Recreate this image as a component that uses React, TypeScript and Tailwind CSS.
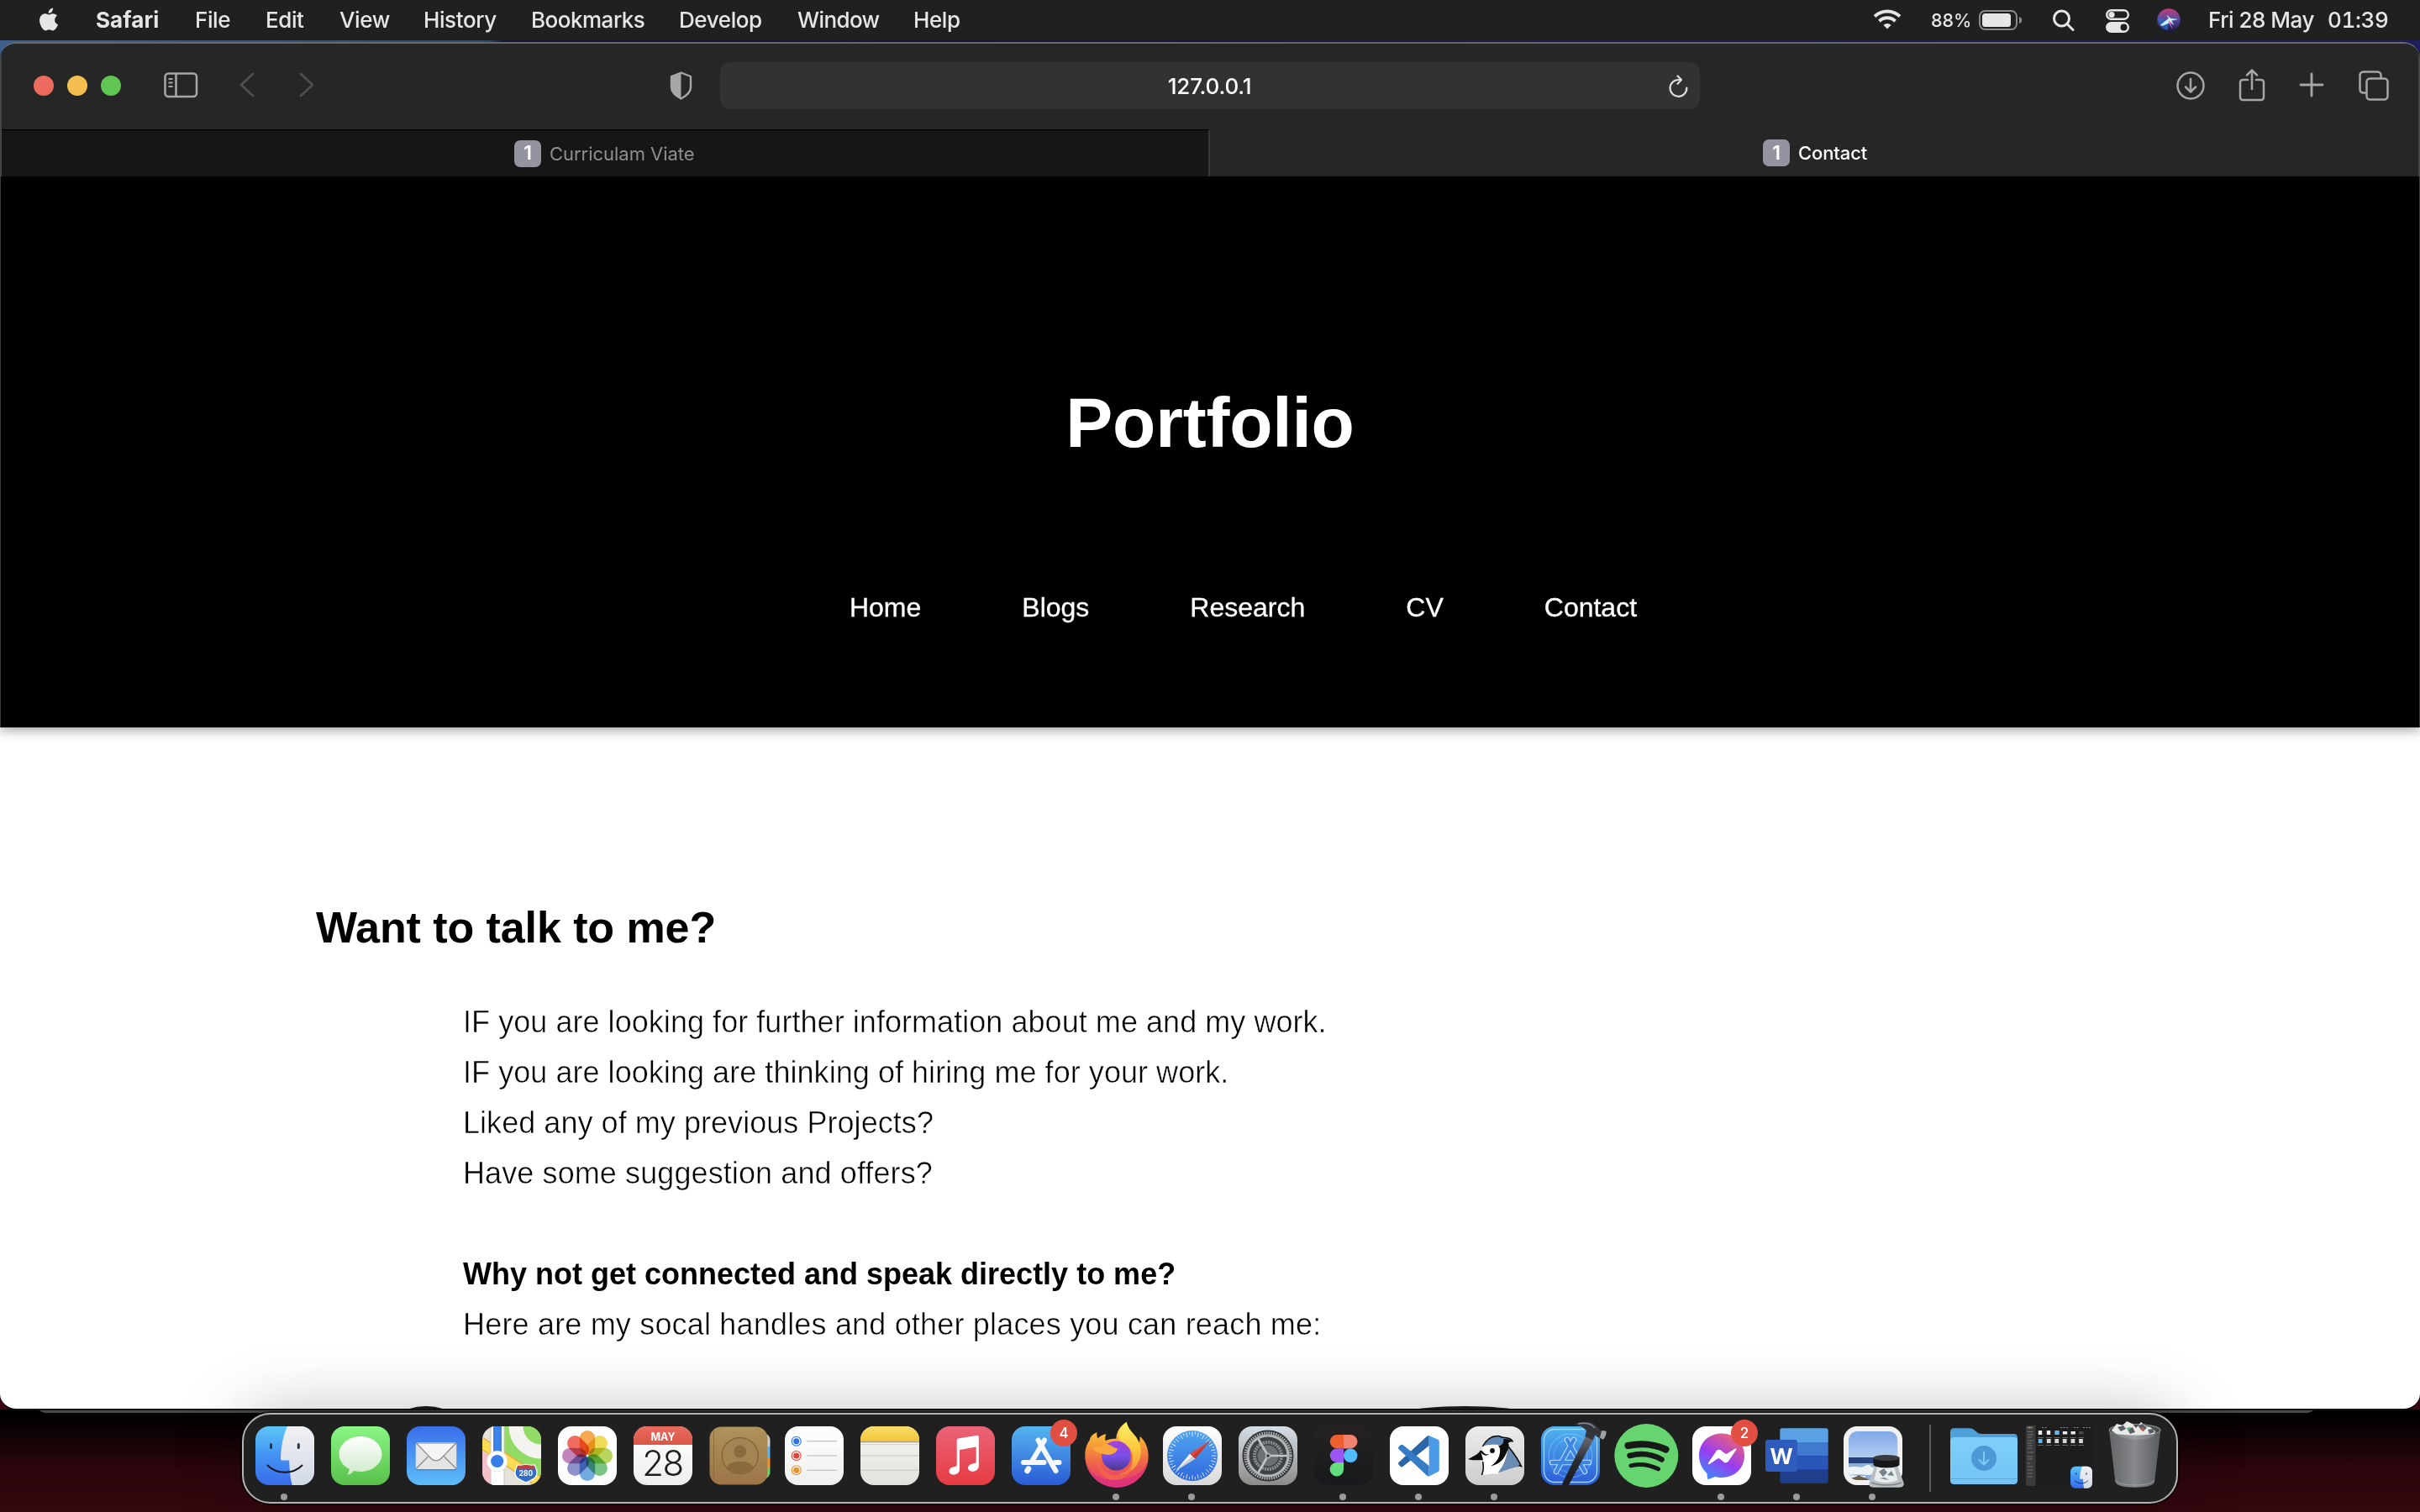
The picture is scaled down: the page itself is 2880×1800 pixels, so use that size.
import React from "react";

type Kids = { children?: React.ReactNode };

/* ---------- Menu bar ---------- */

const menus = [
  { label: "Safari", cls: "w-[118px] font-bold tracking-[0.1px]" },
  { label: "File", cls: "w-[84px]" },
  { label: "Edit", cls: "w-[88px]" },
  { label: "View", cls: "w-[100px]" },
  { label: "History", cls: "w-[128px]" },
  { label: "Bookmarks", cls: "w-[176px] tracking-[-0.5px]" },
  { label: "Develop", cls: "w-[141px]" },
  { label: "Window", cls: "w-[138px] tracking-[-0.6px]" },
  { label: "Help", cls: "w-[80px]" },
];

function MenuBar() {
  return (
    <div className="flex h-[48px] shrink-0 items-center bg-[#202020] text-[26px] leading-[48px] font-medium text-[#e6e6e6] tracking-[-0.4px]">
      <svg className="ml-[42px] mb-[3px] h-[34px] w-[28px]" viewBox="0 0 27 32" fill="#e6e6e6">
        <path d="M22.3 17c0-3.3 2.700-4.900 2.800-5-1.500-2.200-3.900-2.500-4.700-2.600-2-.2-3.900 1.200-4.900 1.200s-2.600-1.200-4.200-1.100c-2.200 0-4.200 1.300-5.300 3.200-2.300 4-.6 9.800 1.600 13 1.100 1.600 2.400 3.300 4.100 3.300 1.600-.1 2.300-1.100 4.200-1.100 2 0 2.500 1.100 4.300 1 1.800 0 2.900-1.600 4-3.200 1.200-1.800 1.800-3.600 1.800-3.700-.1 0-3.700-1.400-3.700-5zM19 7.300c.9-1.100 1.500-2.600 1.300-4.200-1.300.1-2.900.9-3.800 2-.8.900-1.600 2.500-1.400 4 1.500.1 3-.7 3.900-1.800z" />
      </svg>
      <div className="ml-[44px] flex">
        {menus.map((m) => (
          <span key={m.label} className={m.cls}>{m.label}</span>
        ))}
      </div>
      <div className="ml-auto flex items-center pr-[38px]">
        <svg className="mb-[2px] h-[26px] w-[34px]" viewBox="0 0 34 26" fill="none" stroke="#e6e6e6" strokeWidth="4">
          <path d="M2 9.500a21.500 21.500 0 0 1 30 0" />
          <path d="M7.500 15.200a13.600 13.600 0 0 1 19 0" />
          <path d="M17 24.500l-4.600-4.700a6.500 6.500 0 0 1 9.200 0z" fill="#e6e6e6" stroke="none" />
        </svg>
        <span className="ml-[35px] w-[57px] text-[21.500px] tracking-[0px]">88%</span>
        <svg className="h-[24px] w-[52px]" viewBox="0 0 52 24">
          <rect x="1" y="1" width="44" height="22" rx="6.500" fill="none" stroke="#8a8a8a" strokeWidth="2" />
          <rect x="4" y="4" width="34" height="16" rx="3.500" fill="#e6e6e6" />
          <path d="M48 8c2 .6 3.200 2 3.200 4s-1.200 3.400-3.200 4z" fill="#8a8a8a" />
        </svg>
        <svg className="ml-[35px] h-[26px] w-[28px]" viewBox="0 0 28 26" fill="none" stroke="#e6e6e6" strokeWidth="3">
          <circle cx="11.500" cy="11" r="9" />
          <path d="M18 17.500l7 7" strokeLinecap="round" />
        </svg>
        <svg className="ml-[36px] mt-[2px] h-[28px] w-[28px]" viewBox="0 0 28 28">
          <rect x="1.200" y="1.200" width="25.600" height="10.600" rx="5.300" fill="none" stroke="#e6e6e6" strokeWidth="2.400" />
          <circle cx="7" cy="6.500" r="3.600" fill="#e6e6e6" />
          <rect x="0" y="15" width="28" height="13" rx="6.500" fill="#e6e6e6" />
          <circle cx="21.500" cy="21.500" r="4" fill="#202020" />
        </svg>
        <svg className="ml-[33px] h-[30px] w-[28px]" viewBox="0 0 28 28">
          <defs>
            <linearGradient id="siri" x1="0" y1="0" x2="0" y2="1">
              <stop offset="0" stopColor="#c43d7d" />
              <stop offset=".45" stopColor="#5a4a9c" />
              <stop offset="1" stopColor="#151640" />
            </linearGradient>
          </defs>
          <circle cx="14" cy="14" r="13.800" fill="url(#siri)" />
          <path d="M1 12c1 7 6 13 12 14L14 14z" fill="#2a6fd0" opacity=".7" />
          <path d="M4 20L14 12l-2-4 4 4 8 1-7 1.500 3 5-4-3-9 4z" fill="#d9f4ff" stroke="#8fe0ee" strokeWidth=".5" />
          <path d="M15 14l3.500 11-5-9z" fill="#f06ac0" />
        </svg>
        <span className="ml-[33px] w-[142px] whitespace-nowrap tracking-[-0.5px]">Fri 28 May</span>
        <span className="w-[72px] whitespace-nowrap tabular-nums tracking-[-0.4px]">01:39</span>
      </div>
    </div>
  );
}

/* ---------- Browser chrome ---------- */

function Toolbar() {
  return (
    <div className="flex h-[104px] shrink-0 items-center border-x-2 border-[#454545] bg-[#262626] px-[38px]">
      <div className="flex gap-[16px]">
        <span className="size-[24px] rounded-full bg-[#ed6a5f]" />
        <span className="size-[24px] rounded-full bg-[#f5bf4f]" />
        <span className="size-[24px] rounded-full bg-[#61c554]" />
      </div>
      <svg className="ml-[51px] mb-[2px] h-[31px] w-[41px]" viewBox="0 0 41 31" fill="none" stroke="#a6a6a6" strokeWidth="2.600">
        <rect x="1.500" y="1.500" width="37.500" height="27.500" rx="4" />
        <path d="M14.500 2v27" />
        <path d="M5.500 8h5M5.500 12.500h5M5.500 17h5" strokeWidth="2" />
      </svg>
      <svg className="ml-[48px] mb-[2px] h-[30px] w-[20px]" viewBox="0 0 20 30" fill="none" stroke="#4f4f4f" strokeWidth="2.800" strokeLinecap="round" strokeLinejoin="round">
        <path d="M17 2L3 15l14 13" />
      </svg>
      <svg className="ml-[51px] mb-[2px] h-[30px] w-[20px]" viewBox="0 0 20 30" fill="none" stroke="#4f4f4f" strokeWidth="2.800" strokeLinecap="round" strokeLinejoin="round">
        <path d="M3 2l14 13L3 28" />
      </svg>
      <svg className="ml-[421px] mb-[1px] h-[34px] w-[29px]" viewBox="0 0 29 34">
        <path d="M14.500 1.500L26 6v13c0 6-5 10-11.500 13.500C8 29 3 25 3 19V6z" fill="none" stroke="#a6a6a6" strokeWidth="2.400" strokeLinejoin="round" />
        <path d="M14.500 1.500v31C8 29 3 25 3 19V6z" fill="#a6a6a6" />
      </svg>
      <div className="relative ml-[32px] flex h-[56px] w-[1166px] items-center justify-center rounded-[12px] bg-[#323232] text-[26px] font-medium text-white">
        <span className="mr-[1px] mt-[1px] tracking-[-0.2px]">127.0.0.1</span>
        <svg className="absolute right-[13px] top-[15px] h-[28px] w-[25px]" viewBox="0 0 25 28" fill="none" stroke="#dcdcdc" strokeWidth="2.200" strokeLinecap="round" strokeLinejoin="round">
          <path d="M22.300 15.500A9.900 9.900 0 1 1 12.400 6h3" />
          <path d="M11.500 1.500L16 6l-4.500 4.800" />
        </svg>
      </div>
      <div className="-mr-[3px] ml-auto flex items-center text-[#a6a6a6]">
        <svg className="h-[36px] w-[36px]" viewBox="0 0 36 36" fill="none" stroke="currentColor" strokeWidth="2.500" strokeLinecap="round" strokeLinejoin="round">
          <circle cx="18" cy="18" r="15.500" />
          <path d="M18 10v15M12 19.500l6 6 6-6" />
        </svg>
        <svg className="ml-[39px] mb-[3px] h-[40px] w-[32px]" viewBox="0 0 32 40" fill="none" stroke="currentColor" strokeWidth="2.500" strokeLinecap="round" strokeLinejoin="round">
          <path d="M11 14H5a3 3 0 0 0-3 3v18a3 3 0 0 0 3 3h22a3 3 0 0 0 3-3V17a3 3 0 0 0-3-3h-6" />
          <path d="M16 25V3M10 8.500L16 2.500l6 6" />
        </svg>
        <svg className="ml-[40px] mb-[3px] h-[30px] w-[30px]" viewBox="0 0 30 30" fill="none" stroke="currentColor" strokeWidth="2.800" strokeLinecap="round">
          <path d="M15 2v26M2 15h26" />
        </svg>
        <svg className="ml-[41px] mb-[1px] h-[36px] w-[36px]" viewBox="0 0 36 36" fill="none" stroke="currentColor" strokeWidth="2.500" strokeLinejoin="round">
          <path d="M9.500 26.500H5.500a4 4 0 0 1-4-4V5.500a4 4 0 0 1 4-4h17a4 4 0 0 1 4 4V9" />
          <rect x="9.500" y="9.500" width="25" height="25" rx="4" />
        </svg>
      </div>
    </div>
  );
}

function Badge() {
  return (
    <span className="flex size-[32px] items-center justify-center rounded-[7px] bg-[#9494a0] text-[23px] font-semibold leading-none text-white">
      1
    </span>
  );
}

function TabStrip() {
  return (
    <div className="flex h-[56px] shrink-0 border-x-2 border-[#454545] bg-[#262626] text-[22px]">
      <div className="flex w-[1438px] items-center justify-center gap-[10px] border-t border-r-2 border-t-black border-r-[#383838] bg-[#161616] text-[#8f8f8f]">
        <Badge />
        <span className="mt-px w-[174px] whitespace-nowrap tracking-[-0.03px]">Curriculam Viate</span>
      </div>
      <div className="flex flex-1 items-center justify-center gap-[10px] pl-[3px] text-white">
        <Badge />
        <span className="mt-px w-[83px] font-medium tracking-[-0.1px]">Contact</span>
      </div>
    </div>
  );
}

/* ---------- Web page ---------- */

function Page() {
  return (
    <div className="relative flex-1 overflow-hidden bg-white font-['Liberation_Sans',sans-serif]">
      <header className="flex h-[656px] flex-col items-center border-x border-[#3c3c3c] bg-black text-white shadow-[0_4px_12px_rgba(0,0,0,0.34)]">
        <h1 className="mt-[245px] text-[84px] font-bold leading-[96px] tracking-[-0.2px]">Portfolio</h1>
        <nav className="mt-[154px] ml-[79px] flex gap-[120px] text-[32px] leading-[36px] [-webkit-text-stroke:0.300px_#ffffff]">
          <a>Home</a>
          <a>Blogs</a>
          <a>Research</a>
          <a>CV</a>
          <a>Contact</a>
        </nav>
      </header>
      <main className="text-black">
        <h2 className="mt-[208px] ml-[376px] text-[52px] font-bold leading-[60px] tracking-[-0.080px]">Want to talk to me?</h2>
        <div className="mt-[53px] ml-[551px] text-[36px] leading-[60px] whitespace-nowrap tracking-[0.050px] [-webkit-text-stroke:0.500px_#ffffff]">
          <p>IF you are looking for further information about me and my work.</p>
          <p>IF you are looking are thinking of hiring me for your work.</p>
          <p>Liked any of my previous Projects?</p>
          <p className="tracking-[0.100px]">Have some suggestion and offers?</p>
          <p className="mt-[60px] font-bold tracking-[0px] [-webkit-text-stroke:0]">Why not get connected and speak directly to me?</p>
          <p className="tracking-[0.180px]">Here are my socal handles and other places you can reach me:</p>
        </div>
      </main>
      <div className="absolute left-[446px] top-[1464px] h-[120px] w-[122px] rounded-full bg-[#1c1f1e]" />
      <div className="absolute left-[1619px] top-[1464px] h-[60px] w-[248px] rounded-[50%] bg-[#1c211f]" />
    </div>
  );
}

/* ---------- Dock ---------- */

function Slot({ children, running }: Kids & { running?: boolean }) {
  return (
    <svg className="h-[104px] w-[90px] shrink-0 overflow-visible font-['Inter',sans-serif]" viewBox="0 0 90 104">
      {children}
      {running && <circle cx="44" cy="98" r="4" fill="#9c9c9c" />}
    </svg>
  );
}

function Tile({ fill }: { fill: string }) {
  return <rect x="10" y="14" width="70" height="70" rx="16" fill={fill} />;
}

function Grad({ id, stops }: { id: string; stops: string[] }) {
  return (
    <linearGradient id={id} x1="0" y1="0" x2="0" y2="1">
      {stops.map((c, i) => (
        <stop key={i} offset={i / (stops.length - 1)} stopColor={c} />
      ))}
    </linearGradient>
  );
}

function FinderArt() {
  return (
    <>
      <Tile fill="url(#fBlue)" />
      <path d="M48 14h16a16 16 0 0 1 16 16v38a16 16 0 0 1-16 16H53.700c-1.600-6-3.300-17-3.500-29.500H41.500c-1.200 0-1.700-.8-1.500-2C40.500 37 43 25 48 14z" fill="url(#fWhite)" />
      <path d="M28.500 35.500v4M61.300 35.500v4" stroke="#2c3444" strokeWidth="3" strokeLinecap="round" />
      <path d="M24.500 60.500c11 11 30 11 41 0" fill="none" stroke="#15181f" strokeWidth="2" strokeLinecap="round" />
    </>
  );
}

const petals = ["#f2962c", "#eed22f", "#a9cb3b", "#5cb768", "#4f97d9", "#7577bd", "#b46caf", "#ec4d3d"];
const ticks = Array.from({ length: 48 }, (_, i) => i * 7.5);

function RedBadge({ text }: { text: string }) {
  return (
    <>
      <circle cx="72" cy="22" r="16" fill="#e04f41" />
      <text x="72" y="28" fontSize="17" textAnchor="middle" fill="#fff" fontWeight="500">{text}</text>
    </>
  );
}

function Dock() {
  return (
    <div className="relative z-10 mx-auto mt-[4px] flex h-[108px] w-[2304px] rounded-[34px] border-2 border-[#b3b3b3] bg-[#202020] pl-[4px] shadow-[0_0_0_2px_rgba(0,0,0,0.6),0_0_80px_rgba(0,0,0,0.26)]">
      <svg className="absolute size-0">
        <defs>
          <Grad id="fBlue" stops={["#5cc6f8", "#4393f3", "#386be9"]} />
          <Grad id="fWhite" stops={["#f0f0f3", "#d2dae6"]} />
          <Grad id="gMsg" stops={["#8af684", "#58c04a"]} />
          <Grad id="gBubble" stops={["#ffffff", "#cdeac8"]} />
          <Grad id="gMail" stops={["#396eea", "#5ebcf8"]} />
          <Grad id="gPaper" stops={["#ffffff", "#f0efed"]} />
          <Grad id="gRed" stops={["#ea6a5e", "#d95648"]} />
          <Grad id="gTan" stops={["#b0925a", "#9c7448"]} />
          <Grad id="gNote" stops={["#f9dd69", "#f3c63c"]} />
          <Grad id="gGrey" stops={["#f6f5f3", "#e2e1dc"]} />
          <Grad id="gMusic" stops={["#ea6478", "#e63b42"]} />
          <Grad id="gStore" stops={["#55b5f0", "#2a5bd6"]} />
          <Grad id="gFox" stops={["#fcdf4b", "#f7a035", "#ee5c4c", "#e4377c"]} />
          <Grad id="gFoxY" stops={["#fdf169", "#fbc93c", "#f58b3b"]} />
          <Grad id="gPurple" stops={["#a540d8", "#7a50e8", "#4c3590"]} />
          <Grad id="gSafari" stops={["#50a6f0", "#2f67dc"]} />
          <Grad id="gTile" stops={["#ffffff", "#d9d9d9"]} />
          <Grad id="gPref" stops={["#d5dfe6", "#8d8b88"]} />
          <Grad id="gFig" stops={["#262222", "#17191c"]} />
          <Grad id="gJay" stops={["#ececec", "#cdcdcd"]} />
          <Grad id="gXc" stops={["#50b4ee", "#2b5bd8"]} />
          <Grad id="gHandle" stops={["#70747a", "#2a2c33", "#191a1f"]} />
          <linearGradient id="gMess" x1=".2" y1="1" x2=".8" y2="0">
            <stop offset="0" stopColor="#3a8cf7" />
            <stop offset=".45" stopColor="#9a3cf0" />
            <stop offset="1" stopColor="#f4656d" />
          </linearGradient>
          <Grad id="gSky" stops={["#7faae8", "#b5cdf0"]} />
          <Grad id="gFolder" stops={["#7fcffa", "#73c4f4"]} />
          <linearGradient id="gBin" x1="0" y1="0" x2="1" y2="0">
            <stop offset="0" stopColor="#6b6e70" />
            <stop offset=".5" stopColor="#929597" />
            <stop offset="1" stopColor="#5f6265" />
          </linearGradient>
          <clipPath id="cTile"><rect x="10" y="14" width="70" height="70" rx="16" /></clipPath>
          <clipPath id="cView"><rect x="16" y="20" width="58.300" height="58" rx="10" /></clipPath>
        </defs>
      </svg>

      {/* Finder */}
      <Slot running><FinderArt /></Slot>

      {/* Messages */}
      <Slot>
        <Tile fill="url(#gMsg)" />
        <path d="M45 26c14 0 25.500 9.400 25.500 21S59 68 45 68c-2.800 0-5.500-.4-8-1.100-1.700 2.600-4.500 4.400-8 4.800 1.600-1.900 2.600-4.300 2.700-6.900C24 61 19.500 54.500 19.500 47c0-11.600 11.500-21 25.500-21z" fill="url(#gBubble)" />
      </Slot>

      {/* Mail */}
      <Slot>
        <Tile fill="url(#gMail)" />
        <rect x="20.700" y="34.500" width="48.600" height="32" rx="3" fill="#1c4f9c" opacity=".35" />
        <rect x="20.700" y="33" width="48.600" height="32" rx="3" fill="#e4e4e5" />
        <path d="M21.500 64l14-14M68.500 64l-14-14" stroke="#8c8c8c" strokeWidth="1.200" />
        <path d="M21.300 34l18 18.500c3.200 3.200 8.200 3.200 11.400 0l18-18.500z" fill="#f5f5f5" stroke="#8c8c8c" strokeWidth="1.200" />
      </Slot>

      {/* Maps */}
      <Slot>
        <g clipPath="url(#cTile)">
          <rect x="10" y="14" width="70" height="70" fill="#e5e2da" />
          <path d="M35 14h45v62L35 44z" fill="#92dc66" />
          <circle cx="80" cy="14" r="30" fill="none" stroke="#f4f3ef" strokeWidth="17" />
          <path d="M10 44l11 7v33H10z" fill="#f3bfc9" />
          <path d="M8 33l74 50" stroke="#eaa93a" strokeWidth="13.500" />
          <path d="M8 33l74 50" stroke="#fadb52" strokeWidth="11" />
          <path d="M28 14v70" stroke="#c9c6c0" strokeWidth="17" />
          <path d="M28 14v70" stroke="#fff" strokeWidth="15" />
          <path d="M28 14v42" stroke="#2560c4" strokeWidth="9.500" />
          <path d="M28 14v42" stroke="#3b84ee" strokeWidth="7.500" />
        </g>
        <circle cx="27.700" cy="55.500" r="12.300" fill="#fff" stroke="#d5d5d5" strokeWidth=".6" />
        <circle cx="27.700" cy="55.500" r="7.600" fill="#367fe8" />
        <path d="M52 60q5 1 10-1 5 2 10 1 3 5 3 9c0 7-6 9-13 12-7-3-13-5-13-12q0-4 3-9z" fill="#2f6fc8" stroke="#fff" strokeWidth="1.300" />
        <path d="M52.500 60.500q5 1 9.500-.8 5 1.800 9.500.8l1.500 4h-22z" fill="#cf3a32" />
        <text x="62" y="73" fontSize="8.500" fontWeight="700" textAnchor="middle" fill="#fff">280</text>
      </Slot>

      {/* Photos */}
      <Slot>
        <Tile fill="#fdfdfd" />
        <g className="isolate">
          {petals.map((c, i) => (
            <rect key={c} x="35.800" y="19" width="18.400" height="29" rx="9.200" fill={c} opacity=".82" transform={`rotate(${i * 45} 45 49)`} className="mix-blend-multiply" />
          ))}
        </g>
      </Slot>

      {/* Calendar */}
      <Slot>
        <Tile fill="url(#gPaper)" />
        <path d="M10 36v-6a16 16 0 0 1 16-16h38a16 16 0 0 1 16 16v6z" fill="url(#gRed)" />
        <text x="45" y="30.500" fontSize="12.500" fontWeight="700" textAnchor="middle" fill="#fff">MAY</text>
        <text x="44.500" y="73" fontSize="42" fontWeight="300" textAnchor="middle" fill="#1e1e1e" letterSpacing="-1.500">28</text>
      </Slot>

      {/* Contacts */}
      <Slot>
        <path d="M76 22c5 2 6.500 5 6.500 9v7H76z" fill="#cfcfcb" />
        <path d="M76 38h6.500v13H76z" fill="#5cb6f0" />
        <path d="M76 51h6.500v12H76z" fill="#f1952f" />
        <path d="M76 63h6.500v5c0 4-2 7-6.500 9z" fill="#6bd562" />
        <rect x="10.500" y="14.500" width="69" height="69" rx="14" fill="url(#gTan)" />
        <path d="M15.500 18v62" stroke="#8d6c3c" strokeWidth="1" />
        <circle cx="46.700" cy="49" r="21.500" fill="#a58453" stroke="#83663a" strokeWidth="1.400" />
        <circle cx="46.700" cy="44" r="7.500" fill="#8b6b3d" />
        <path d="M30.500 63c3-6 9-7 16.200-7s13.200 1 16.200 7a21 21 0 0 1-32.400 0z" fill="#8b6b3d" />
      </Slot>

      {/* Reminders */}
      <Slot>
        <Tile fill="url(#gPaper)" />
        {[["#2f72ea", 31.7], ["#e0443a", 49], ["#e8932f", 66.3]].map(([c, y]) => (
          <g key={c}>
            <circle cx="23.700" cy={y} r="5.500" fill="none" stroke={c as string} strokeWidth="1.100" />
            <circle cx="23.700" cy={y} r="3.500" fill={c as string} />
            <path d={`M36.300 ${y}H72`} stroke="#b5b5b5" strokeWidth="1.100" />
          </g>
        ))}
      </Slot>

      {/* Notes */}
      <Slot>
        <Tile fill="url(#gGrey)" />
        <path d="M10 32v-2a16 16 0 0 1 16-16h38a16 16 0 0 1 16 16v2z" fill="url(#gNote)" />
        <path d="M10 32.500h70" stroke="#a8a294" strokeWidth="1.400" />
        <path d="M11 35.500h68" stroke="#b9b9b6" strokeDasharray="1.200 1.200" />
        <path d="M10 49h70M10 66.300h70" stroke="#c9c9c4" />
      </Slot>

      {/* Music */}
      <Slot>
        <Tile fill="url(#gMusic)" />
        <path d="M34.700 30.500c0-1.200.6-1.900 1.700-2.100l22.500-3.600c1.200-.2 1.900.3 1.900 1.500v35c0 3.700-3 5.900-6.700 6.400-3.500.4-6.100-1.300-6.100-4.100 0-3 2.600-4.600 5.500-5.200l2.600-.5c1.100-.2 1.600-.8 1.600-2V38.600l-19.700 3.500v23c0 3.700-2.600 5.900-6.300 6.400-3.500.4-6.200-1.300-6.200-4.100 0-3 2.400-4.600 5.500-5.200l2.100-.4c1.100-.2 1.600-.8 1.600-2z" fill="#fff" />
      </Slot>

      {/* App Store */}
      <Slot>
        <Tile fill="url(#gStore)" />
        <g stroke="#f5f8fc" strokeWidth="6" strokeLinecap="round">
          <path d="M49 30.500L34.500 55" />
          <path d="M41.500 30.500L62.500 67" />
          <path d="M24 57h24.500M61.500 57h5" />
          <path d="M30 64.500l-1.500 2.500" strokeWidth="6.500" />
        </g>
        <RedBadge text="4" />
      </Slot>

      {/* Firefox */}
      <Slot running>
        <path d="M7.300 49c0-8 2-14 5.500-18.500.3-3.500 3.400-7.500 8.700-9.200-.6 3 .2 5.300 1 7 2.600-2.700 6-4.500 10-5-1.500 2.700-1.500 5.500-.8 8 3-2 8-3 12.700-2.500C44 21 50 12.500 56.700 8.700c1 7 6.500 12 11.300 18 1.500 2.500 2.800 5.200 3.500 7.500 1.100-2.500 1-6.200 1-8.500 7 6 10.200 15 10.200 24C82.700 70 66 86.700 45 86.700S7.300 70 7.300 49z" fill="url(#gFox)" />
        <path d="M56.700 8.700c1 7 6.500 12 11.300 18 4 6 7 13 5.500 22C71 62 60 72 48 71c9-2 15-8 16-17 1-7-2-14-8-18C46 31 41.500 22 56.700 8.700z" fill="url(#gFoxY)" />
        <circle cx="44.500" cy="49" r="17.500" fill="url(#gPurple)" />
        <path d="M17 40c3-2.500 6-2.500 9-1.500 2.500-3.500 6-3.500 9-3 4 1.500 7 4.500 11 5-1 4-4 6-8 7-5 1-7 0-13-1.500-4-1-7-3-8-6z" fill="#f9a83b" />
        <path d="M8 54c3 14 14 24 34 24 18 0 32-6 39-20-4 17-18 28.700-36 28.700C26 86.700 10 73 8 54z" fill="#dc2f7d" opacity=".75" />
        <path d="M22 50c1 15 12 23 24 22 9-1 15-7 17-13 1 9-7 18-20 19-14 .5-24-13-21-28z" fill="#f3684a" opacity=".75" />
      </Slot>

      {/* Safari */}
      <Slot running>
        <Tile fill="url(#gTile)" />
        <circle cx="45" cy="49" r="30" fill="url(#gSafari)" />
        {ticks.map((a, i) => (
          <path key={a} d={i % 2 ? "M45 20.500v3" : "M45 20.500v5.500"} stroke="#dcecfb" strokeWidth=".9" transform={`rotate(${a} 45 49)`} />
        ))}
        <path d="M25.300 66.700L42 46.500l6.500 6z" fill="#f3f4f6" />
        <path d="M65.500 31.500L42 46.500l6.500 6z" fill="#e2473d" />
        <path d="M25.300 66.700L48.500 52.500l-3.200-3z" fill="#c9cdd3" />
        <path d="M65.500 31.500L48.500 52.500l-3.200-3z" fill="#c03830" />
      </Slot>

      {/* System Preferences */}
      <Slot>
        <Tile fill="url(#gPref)" />
        <circle cx="45" cy="49" r="30.500" fill="#303235" />
        <circle cx="45" cy="49" r="27" fill="none" stroke="#a6aaab" strokeWidth="3.500" strokeDasharray="1.700 1.130" />
        <circle cx="45" cy="49" r="24" fill="#3f4245" stroke="#b3b6b6" strokeWidth="3" />
        <circle cx="45" cy="49" r="16" fill="none" stroke="#8c9091" strokeWidth="4" strokeDasharray="2 1" />
        <circle cx="45" cy="49" r="12.500" fill="#6d7173" />
        <path d="M45 49h23M45 49L33.500 29M45 49L33.500 69" stroke="#c2c5c5" strokeWidth="2.600" />
        <circle cx="45" cy="49" r="3.500" fill="#a7abab" />
        <circle cx="45" cy="49" r="1.500" fill="#26282a" />
      </Slot>

      {/* Figma */}
      <Slot running>
        <Tile fill="url(#gFig)" />
        <path d="M37 24h8v16.500h-8A8.250 8.250 0 0 1 37 24z" fill="#ee5f2e" />
        <path d="M45 24h8.200a8.250 8.250 0 0 1 0 16.500H45z" fill="#f18270" />
        <path d="M37 40.500h8V57h-8a8.250 8.250 0 0 1 0-16.500z" fill="#9a55f4" />
        <circle cx="53.200" cy="48.800" r="8.250" fill="#52bcf9" />
        <path d="M37 57h8v8.500A8.200 8.200 0 1 1 37 57z" fill="#63dd7d" />
      </Slot>

      {/* VS Code */}
      <Slot running>
        <Tile fill="#fff" />
        <path d="M21 56.500c-1.200 1-1.200 2.200-.3 3.200l2 2c1 .8 2 .8 3 .1L56.700 37V25c-1 0-2 .4-3 1.300z" fill="#2b66a8" />
        <path d="M21 41.500c-1.200-1-1.200-2.200-.3-3.200l2-2c1-.8 2-.8 3-.1L56.700 61v12.500c-1 0-2-.4-3-1.300z" fill="#367bc5" />
        <path d="M56.700 25l10.500 4.800c1 .5 1.600 1.400 1.600 2.500v33.400c0 1.100-.6 2-1.600 2.500L56.700 73.500z" fill="#4b9ae8" />
      </Slot>

      {/* BlueJ */}
      <Slot running>
        <Tile fill="url(#gJay)" />
        <path d="M31 38c8-6 20-6 30-1l-6 28-7 6c-6-1-12 0-18.500 1.500C32 66 31 60 27.500 54z" fill="#fff" />
        <path d="M31.500 37c4-7 11-11.500 18.500-11.500 2 0 3 1.500 5 1.700 6 0 10 2 11.500 5.300-4-1.500-7 .5-9 4-8-1-16-1.500-26 .5z" fill="#6288b5" />
        <path d="M61 38c5 6 11 14 15.500 23.500-9 1-18 4.500-28 8 7-9 11-18 12.500-31.500z" fill="#6a8cb3" />
        <path d="M30.500 38c4-8 11-12.500 18-12.500 3 0 4 1.700 6.500 1.800 5 .2 10 1.700 11.500 5.200M61 38c5 6 11 14 15.500 23.500l-3-1M30.500 56c1.500 6 1 11-1 16" fill="none" stroke="#0c0c0c" strokeWidth="1.600" />
        <path d="M55 29c5-.5 9 .5 11.500 3.500-2-.5-4 .3-5.500 1.500 1.500 3 .5 7-1.500 10-3 8-8 15-19.500 17.500 6-4 10-9 11-16 .5-4 0-7-2.500-9 5 1 8-3 6.500-7.500z" fill="#0c0c0c" />
        <path d="M13 53c6-3 11-5 14.500-9.500 1.500 3 3 7 3.500 11C25 54 18 55 13 53zM27 43c2-1 4 1 5 2.500 1.500 2 3.500 2 6 1.500-3 3-8 2-11-4z" fill="#0c0c0c" />
        <circle cx="42" cy="43" r="2.900" fill="#0c0c0c" />
      </Slot>

      {/* Xcode */}
      <Slot>
        <Tile fill="url(#gXc)" />
        <g fill="none" stroke="#a7d6fa">
          <rect x="13.500" y="17.500" width="63" height="63" rx="13" strokeWidth="1.300" />
          <circle cx="45" cy="49" r="26" opacity=".5" />
          <circle cx="45" cy="49" r="20" opacity=".4" />
        </g>
        <g strokeLinecap="round">
          <path d="M49 30L28 68M41 30l21 38M23 57h44" stroke="#b9dffc" strokeWidth="6.500" />
          <path d="M49 30L28 68M41 30l21 38M23 57h44" stroke="#3f86e4" strokeWidth="4.300" />
        </g>
        <path d="M64.500 23l9 4.500L42 85.500c-1.500 2.500-8 0-6.500-4z" fill="url(#gHandle)" />
        <path d="M50 12c6-4 15-4.500 22-1.500 5 2.500 7 6 9 8.500l6.500.8c.5 3-1 7-3.500 10l-8-3.500-1.500-2-3 6-9-4 1.500-7c-3-4-8-6-14-7.300z" fill="#34363d" />
        <path d="M54 11c8-2 16-.5 20 5" fill="none" stroke="#878a92" strokeWidth="1.500" />
        <path d="M82 19l5.500.8c.5 3-1 7-3.500 10l-4-2z" fill="#9da0a7" />
      </Slot>

      {/* Spotify */}
      <Slot>
        <circle cx="45.300" cy="49" r="38" fill="#67d56f" />
        <g fill="none" stroke="#171a18" strokeLinecap="round">
          <path d="M23.500 37c16-3.500 32-1.500 45 4.500" strokeWidth="8" />
          <path d="M25.500 49c13-3.500 27-1.500 38 4.500" strokeWidth="6.500" />
          <path d="M27 60.800c11-2.800 22.500-1 32.500 4" strokeWidth="5" />
        </g>
      </Slot>

      {/* Messenger */}
      <Slot running>
        <Tile fill="#fff" />
        <path d="M45 22.500c15.500 0 27 11.200 27 26.300S60.500 75 45 75c-3 0-5.500-.4-8-1.100-3 .8-5.500 2.800-8 3-1.500-.4-1-4-1.700-7C21.500 64.500 18 57.500 18 48.800c0-15.100 11.500-26.300 27-26.300z" fill="url(#gMess)" />
        <path d="M29 57.500l9.500-14c1.300-2 3.800-2.300 5.500-.9l5 3.800c.8.6 1.600.6 2.400 0l9.600-6c1-.6 2 .4 1.400 1.400l-9.400 13.700c-1.300 2-3.800 2.300-5.500.9l-5-3.800c-.8-.6-1.600-.6-2.400 0L30.500 59c-1.200.7-2.100-.4-1.500-1.500z" fill="#fff" />
        <RedBadge text="2" />
      </Slot>

      {/* Word */}
      <Slot running>
        <path d="M24.300 33V19a2.700 2.700 0 0 1 2.700-2.700h52a2.700 2.700 0 0 1 2.700 2.700v14z" fill="#5ba1e6" />
        <path d="M24.300 33h57.400v16.300H24.300z" fill="#4079cf" />
        <path d="M24.300 49.300h57.400v16.500H24.300z" fill="#2a56b8" />
        <path d="M24.300 65.800h57.400V79a2.700 2.700 0 0 1-2.700 2.700H27a2.700 2.700 0 0 1-2.700-2.700z" fill="#1f3e8c" />
        <rect x="7" y="30" width="38" height="38" rx="3" fill="#2d5cbc" />
        <text x="26" y="59" fontSize="27" fontWeight="700" textAnchor="middle" fill="#fff" fontFamily="Open Sans, sans-serif">W</text>
      </Slot>

      {/* Preview */}
      <Slot running>
        <Tile fill="#f3f2f1" />
        <g clipPath="url(#cView)">
          <rect x="16" y="20" width="59" height="32" fill="url(#gSky)" />
          <rect x="16" y="51" width="59" height="8" fill="#27407f" />
          <rect x="16" y="58" width="59" height="20" fill="#8fb0d6" />
          <path d="M16 63c8-3 14 2 20-2s6 3 10 2v8c-10 3-20-2-30 2zM16 73c8-2 12 1 20 0v3H16z" fill="#eef3f8" />
          <path d="M16 78c4-4 9-3 12-6 4 3 8 2 12 6z" fill="#6b5a48" />
        </g>
        <path d="M47 61h27l7.500 20c1 3-1 5.700-5 5.700h-31c-4 0-6-2.700-5-5.700z" fill="#b9bfc2" />
        <path d="M50 62h20l4.500 16c-8 4-20 4-28 0z" fill="#e8eef0" />
        <path d="M52 68l6-4 4 5-5 5zM62 72l5-5 3 6zM53 76l6-1 5 3z" fill="#78828a" />
        <path d="M45.500 51v9c3 4.500 28 4.500 31 0v-9z" fill="#17181a" />
        <ellipse cx="61" cy="51.500" rx="15.500" ry="3.600" fill="#3a3b3e" />
        <path d="M43 81c9 4 27 4 36 0" fill="none" stroke="#7d8488" strokeWidth="1.400" />
      </Slot>

      <div className="ml-[22px] mt-[12px] h-[80px] w-[2px] shrink-0 bg-[#5a5a5a]" />
      <div className="w-[18px] shrink-0" />

      {/* Downloads */}
      <Slot>
        <path d="M5 79V20.500c0-2.500 1.700-4.200 4.200-4.200h18.300c2.500 0 4.500.8 6.500 2.400l3 2.600c1.500 1.200 3 1.700 5 1.700h39c2.500 0 4 1.700 4 4V79z" fill="#4f9fd8" />
        <path d="M5 31c0-2.200 1.700-3.900 3.900-3.900h72.200c2.200 0 3.900 1.700 3.900 3.900v47.800c0 2.400-1.700 4.200-4.200 4.200H9.200C6.700 83 5 81.200 5 78.800z" fill="url(#gFolder)" />
        <path d="M5.500 76.500h79" stroke="#5fabdc" />
        <circle cx="45" cy="52" r="15" fill="#4f98d6" />
        <path d="M45 45v14M39.500 54l5.500 5.500 5.500-5.500" fill="none" stroke="#7ccbf8" strokeWidth="2" strokeLinecap="round" strokeLinejoin="round" />
      </Slot>

      {/* Minimised Finder window */}
      <Slot>
        <rect x="5" y="13" width="79.500" height="72" rx="2" fill="#1d1d1d" />
        <path d="M5 15a2 2 0 0 1 2-2h9.500v72H7a2 2 0 0 1-2-2z" fill="#3a3b3c" />
        <circle cx="7.500" cy="15.500" r=".9" fill="#ed6a5f" />
        <circle cx="9.700" cy="15.500" r=".9" fill="#f5bf4f" />
        <circle cx="11.900" cy="15.500" r=".9" fill="#61c554" />
        <path d="M7 20.500h6M7 24h7M7 27h5M7 31h7M7 34h5M7 37h6M7 40h5M7 45h7M7 50h6M7 53h6M7 58h3M7 62h6M7 66h6M7 70h5M7 74h6" stroke="#77797c" strokeWidth=".9" />
        <path d="M24 15.500h6M46 15.500h10M62 15.500h6M73 15.500h9" stroke="#8b8b8b" strokeWidth="1" strokeDasharray="2 1.500" />
        {[22, 32, 41.500, 51, 60.700, 70.300].map((x, i) => (
          <g key={x}>
            <rect x={x - 2.200} y={i > 2 ? 20 : 19} width={i > 1 ? 5.400 : 4.400} height={i > 2 ? 3.500 : 5} fill={i === 2 ? "#5cb8ee" : i === 5 ? "#4a4a4a" : "#ececec"} />
            <path d={`M${x - 3} 27.500h7`} stroke="#7a7a7a" strokeWidth=".8" />
            <rect x={x - 2.200} y="29" width="4.800" height="5" fill={i === 0 ? "#5cb8ee" : "#d8d8d8"} />
            <path d={`M${x - 3} 36.500h7`} stroke="#7a7a7a" strokeWidth=".8" />
          </g>
        ))}
        <g transform="translate(54.300 56.500) scale(.371)"><FinderArt /></g>
      </Slot>

      {/* Trash */}
      <Slot>
        <ellipse cx="44.700" cy="18.500" rx="30.500" ry="7" fill="#4b4e50" stroke="#8b8e90" strokeWidth="1.200" />
        <path d="M17 19l6-8 7 2 5-5 7 3 4 5 6-7 6 5 5 1 6 5-2 6-9 3-14 1-16-3z" fill="#e9e9e7" />
        <path d="M24 15l7-2 3 4-6 3zM48 13l6-2 5 5-5 4zM36 18l6-3 3 6-6 2zM60 18l6-1 2 4-6 2z" fill="#58606a" />
        <path d="M34 16l6-1-2 4z" fill="#55b36a" />
        <path d="M50 17l5-2 1 5z" fill="#b3654a" />
        <path d="M14.200 20c5 6 56 6 61 0l-7.200 60c-.6 4.500-9 6.700-23.300 6.700S22 84.500 21.400 80z" fill="url(#gBin)" opacity=".9" />
        <path d="M21.400 78c2 8 44 8 46.600 0" fill="none" stroke="#b5b8ba" strokeWidth="1" opacity=".6" />
      </Slot>
    </div>
  );
}

export default function App() {
  return (
    <div className="flex h-[1800px] w-[2880px] flex-col overflow-hidden bg-[#38070f] font-['Inter',sans-serif]">
      <MenuBar />
      <div className="flex h-[1630px] shrink-0 flex-col bg-[linear-gradient(to_right,#3d5f8c_0,#2b4a70_580px,#14143c_600px,#1e1e5c_100%)] [background-size:100%_60px] bg-no-repeat">
        <div className="relative z-[1] mt-[2px] -mb-[1px] flex flex-1 flex-col overflow-hidden rounded-[20px] border-y-2 border-t-[#686868] border-b-[#101010] bg-[#262626]">
          <div className="-mt-[2px] flex flex-1 flex-col">
            <Toolbar />
            <TabStrip />
            <Page />
          </div>
        </div>
      </div>
      <div className="relative flex-1 bg-[linear-gradient(to_bottom,rgba(0,0,0,1)_0,rgba(0,0,0,0.85)_20px,rgba(0,0,0,0.25)_70px,rgba(0,0,0,0.05)_122px)]">
        <div className="absolute left-[44px] -top-[6px] h-[10px] w-[2712px] rounded-b-[10px] bg-[#4a4a4a]" />
        <Dock />
      </div>
    </div>
  );
}
